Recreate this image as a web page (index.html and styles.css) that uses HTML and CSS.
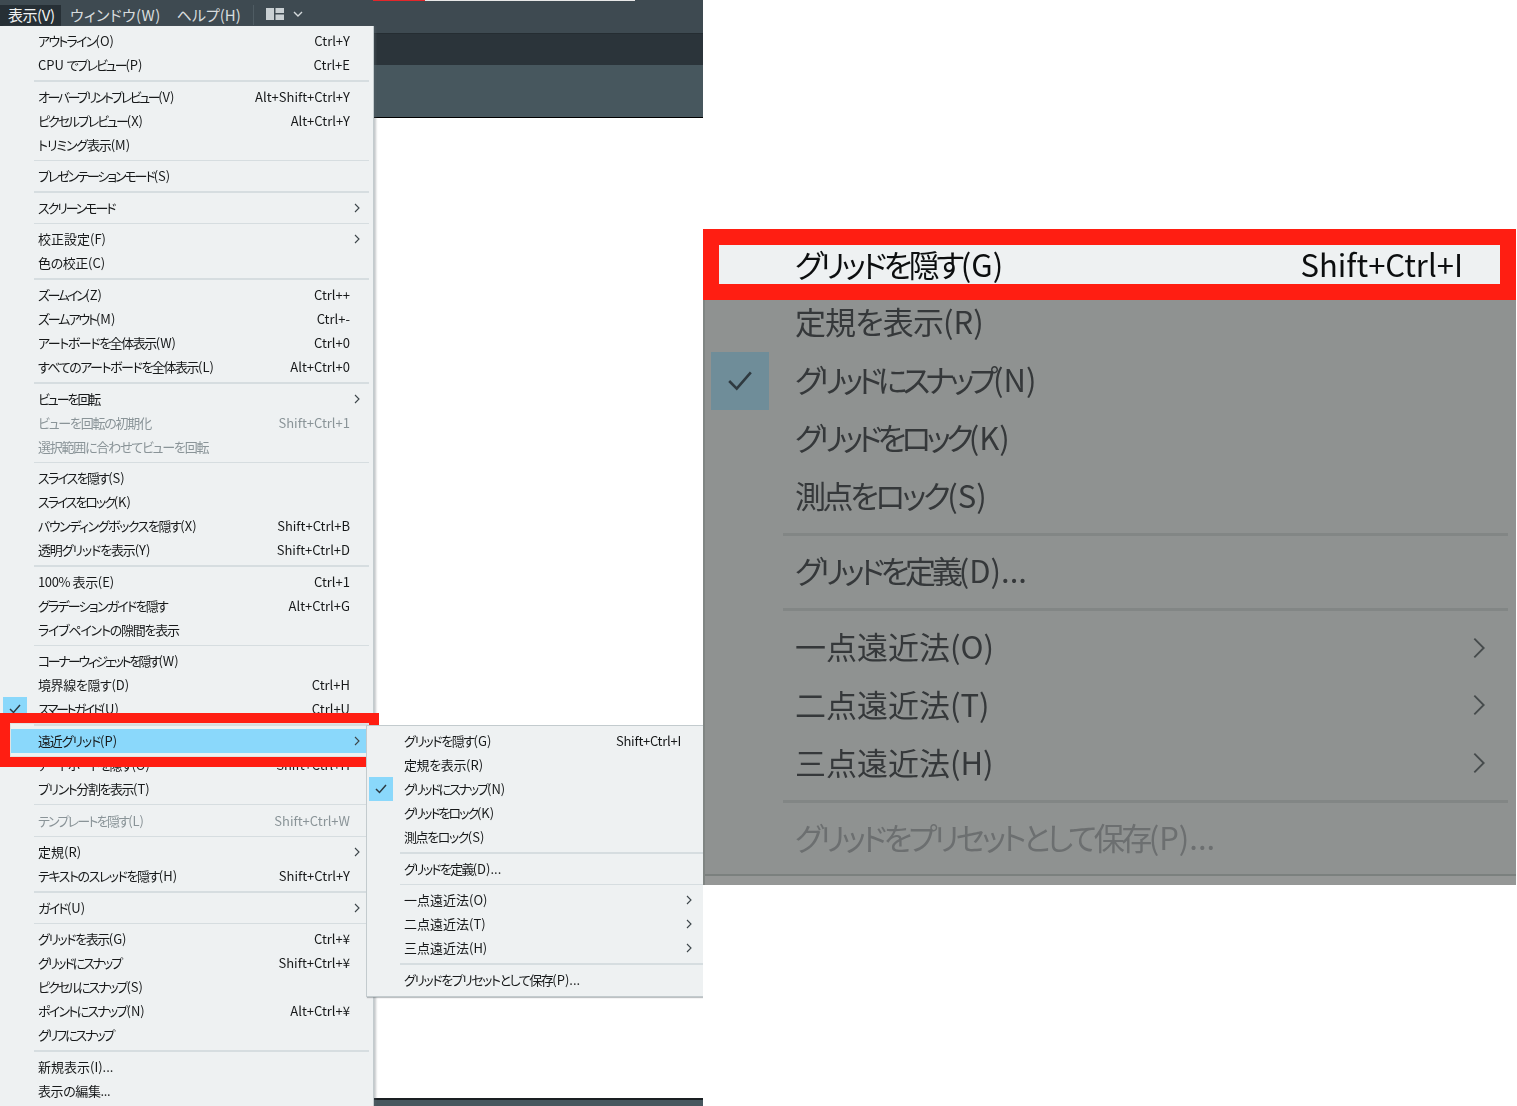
FILE: index.html
```html
<!DOCTYPE html>
<html lang="ja">
<head>
<meta charset="utf-8">
<title>遠近グリッド</title>
<link rel="stylesheet" href="styles.css">
</head>
<body>
<div class="page">
  <section class="shot">
    <div class="progress"><span class="p-red"></span><span class="p-white"></span></div>
    <header class="menubar">
      <span class="mb-item mb-active">表示(V)</span>
      <span class="mb-item">ウィンドウ(W)</span>
      <span class="mb-item">ヘルプ(H)</span>
      <span class="mb-sep"></span>
      <svg class="mb-layout" width="18" height="14" viewBox="0 0 18 14"><path d="M0 1h8v12H0zM9.500 1H18v5H9.500zM9.500 7.500H18V13H9.500z" fill="#c9d0d3"/></svg>
      <svg class="mb-chev" width="10" height="6" viewBox="0 0 10 6"><path d="M1 1l4 4 4-4" fill="none" stroke="#d5dadc" stroke-width="1.400"/></svg>
    </header>
    <div class="bar-dark"></div>
    <div class="bar-mid"></div>
    <div class="canvas"></div>
    <div class="bar-bottom"></div>

    <nav class="menu">
      <div class="row"><i class="ico"></i><span class="t6">アウトライン<b>(O)</b></span><kbd>Ctrl+Y</kbd></div>
      <div class="row"><i class="ico"></i><span class="t7"><b>CPU </b>でプレビュー<b>(P)</b></span><kbd>Ctrl+E</kbd></div>
      <div class="sep"></div>
      <div class="row"><i class="ico"></i><span class="t8">オーバープリントプレビュー<b>(V)</b></span><kbd>Alt+Shift+Ctrl+Y</kbd></div>
      <div class="row"><i class="ico"></i><span class="t7">ピクセルプレビュー<b>(X)</b></span><kbd>Alt+Ctrl+Y</kbd></div>
      <div class="row"><i class="ico"></i><span class="t3">トリミング表示<b>(M)</b></span></div>
      <div class="sep"></div>
      <div class="row"><i class="ico"></i><span class="t7">プレゼンテーションモード<b>(S)</b></span></div>
      <div class="sep"></div>
      <div class="row"><i class="ico"></i><span class="t7">スクリーンモード</span><svg class="arrow" viewBox="0 0 6 10"><path d="M1 1l4 4-4 4"/></svg></div>
      <div class="sep"></div>
      <div class="row"><i class="ico"></i><span>校正設定<b>(F)</b></span><svg class="arrow" viewBox="0 0 6 10"><path d="M1 1l4 4-4 4"/></svg></div>
      <div class="row"><i class="ico"></i><span class="t1">色の校正<b>(C)</b></span></div>
      <div class="sep"></div>
      <div class="row"><i class="ico"></i><span class="t8">ズームイン<b>(Z)</b></span><kbd>Ctrl++</kbd></div>
      <div class="row"><i class="ico"></i><span class="t7">ズームアウト<b>(M)</b></span><kbd>Ctrl+-</kbd></div>
      <div class="row"><i class="ico"></i><span class="t5">アートボードを全体表示<b>(W)</b></span><kbd>Ctrl+0</kbd></div>
      <div class="row"><i class="ico"></i><span class="t5">すべてのアートボードを全体表示<b>(L)</b></span><kbd>Alt+Ctrl+0</kbd></div>
      <div class="sep"></div>
      <div class="row"><i class="ico"></i><span class="t7">ビューを回転</span><svg class="arrow" viewBox="0 0 6 10"><path d="M1 1l4 4-4 4"/></svg></div>
      <div class="row off"><i class="ico"></i><span class="t4">ビューを回転の初期化</span><kbd>Shift+Ctrl+1</kbd></div>
      <div class="row off"><i class="ico"></i><span class="t4">選択範囲に合わせてビューを回転</span></div>
      <div class="sep"></div>
      <div class="row"><i class="ico"></i><span class="t6">スライスを隠す<b>(S)</b></span></div>
      <div class="row"><i class="ico"></i><span class="t7">スライスをロック<b>(K)</b></span></div>
      <div class="row"><i class="ico"></i><span class="t5">バウンディングボックスを隠す<b>(X)</b></span><kbd>Shift+Ctrl+B</kbd></div>
      <div class="row"><i class="ico"></i><span class="t3">透明グリッドを表示<b>(Y)</b></span><kbd>Shift+Ctrl+D</kbd></div>
      <div class="sep"></div>
      <div class="row"><i class="ico"></i><span class="t1">100% 表示<b>(E)</b></span><kbd>Ctrl+1</kbd></div>
      <div class="row"><i class="ico"></i><span class="t6">グラデーションガイドを隠す</span><kbd>Alt+Ctrl+G</kbd></div>
      <div class="row"><i class="ico"></i><span class="t4">ライブペイントの隙間を表示</span></div>
      <div class="sep"></div>
      <div class="row"><i class="ico"></i><span class="t8">コーナーウィジェットを隠す<b>(W)</b></span></div>
      <div class="row"><i class="ico"></i><span class="t1">境界線を隠す<b>(D)</b></span><kbd>Ctrl+H</kbd></div>
      <div class="row"><i class="ico ico-on"><svg viewBox="0 0 12 10"><path d="M1 5l3.500 3.500L11 1"/></svg></i><span class="t8">スマートガイド<b>(U)</b></span><kbd>Ctrl+U</kbd></div>
      <div class="sep"></div>
      <div class="row row-hot"><i class="ico"></i><span class="t3">遠近グリッド<b>(P)</b></span><svg class="arrow" viewBox="0 0 6 10"><path d="M1 1l4 4-4 4"/></svg></div>
      <div class="row"><i class="ico"></i><span class="t5">アートボードを隠す<b>(O)</b></span><kbd>Shift+Ctrl+H</kbd></div>
      <div class="row"><i class="ico"></i><span class="t5">プリント分割を表示<b>(T)</b></span></div>
      <div class="sep"></div>
      <div class="row off"><i class="ico"></i><span class="t6">テンプレートを隠す<b>(L)</b></span><kbd>Shift+Ctrl+W</kbd></div>
      <div class="sep"></div>
      <div class="row"><i class="ico"></i><span>定規<b>(R)</b></span><svg class="arrow" viewBox="0 0 6 10"><path d="M1 1l4 4-4 4"/></svg></div>
      <div class="row"><i class="ico"></i><span class="t5">テキストのスレッドを隠す<b>(H)</b></span><kbd>Shift+Ctrl+Y</kbd></div>
      <div class="sep"></div>
      <div class="row"><i class="ico"></i><span class="t6">ガイド<b>(U)</b></span><svg class="arrow" viewBox="0 0 6 10"><path d="M1 1l4 4-4 4"/></svg></div>
      <div class="sep"></div>
      <div class="row"><i class="ico"></i><span class="t5">グリッドを表示<b>(G)</b></span><kbd>Ctrl+¥</kbd></div>
      <div class="row"><i class="ico"></i><span class="t7">グリッドにスナップ</span><kbd>Shift+Ctrl+¥</kbd></div>
      <div class="row"><i class="ico"></i><span class="t7">ピクセルにスナップ<b>(S)</b></span></div>
      <div class="row"><i class="ico"></i><span class="t6">ポイントにスナップ<b>(N)</b></span><kbd>Alt+Ctrl+¥</kbd></div>
      <div class="row"><i class="ico"></i><span class="t7">グリフにスナップ</span></div>
      <div class="sep"></div>
      <div class="row"><i class="ico"></i><span>新規表示<b>(I)...</b></span></div>
      <div class="row"><i class="ico"></i><span class="t1">表示の編集...</span></div>
    </nav>

    <div class="callout"></div>

    <nav class="menu submenu">
      <div class="row"><i class="ico"></i><span class="t5">グリッドを隠す<b>(G)</b></span><kbd>Shift+Ctrl+I</kbd></div>
      <div class="row"><i class="ico"></i><span class="t1">定規を表示<b>(R)</b></span></div>
      <div class="row"><i class="ico ico-on"><svg viewBox="0 0 12 10"><path d="M1 5l3.500 3.500L11 1"/></svg></i><span class="t7">グリッドにスナップ<b>(N)</b></span></div>
      <div class="row"><i class="ico"></i><span class="t7">グリッドをロック<b>(K)</b></span></div>
      <div class="row"><i class="ico"></i><span class="t5">測点をロック<b>(S)</b></span></div>
      <div class="sep"></div>
      <div class="row"><i class="ico"></i><span class="t6">グリッドを定義<b>(D)...</b></span></div>
      <div class="sep"></div>
      <div class="row"><i class="ico"></i><span>一点遠近法<b>(O)</b></span><svg class="arrow" viewBox="0 0 6 10"><path d="M1 1l4 4-4 4"/></svg></div>
      <div class="row"><i class="ico"></i><span>二点遠近法<b>(T)</b></span><svg class="arrow" viewBox="0 0 6 10"><path d="M1 1l4 4-4 4"/></svg></div>
      <div class="row"><i class="ico"></i><span>三点遠近法<b>(H)</b></span><svg class="arrow" viewBox="0 0 6 10"><path d="M1 1l4 4-4 4"/></svg></div>
      <div class="sep"></div>
      <div class="row"><i class="ico"></i><span class="t5">グリッドをプリセットとして保存<b>(P)...</b></span></div>
    </nav>
  </section>

  <section class="detail">
    <div class="panel">
      <div class="zfirst"><span class="t5">グリッドを隠す<b>(G)</b></span><kbd>Shift+Ctrl+I</kbd></div>
      <div class="zlist">
        <div class="zrow"><i class="zico"></i><span class="t1">定規を表示<b>(R)</b></span></div>
        <div class="zrow"><i class="zico zico-on"><svg viewBox="0 0 12 10"><path d="M1 5l3.500 3.500L11 1"/></svg></i><span class="t7">グリッドにスナップ<b>(N)</b></span></div>
        <div class="zrow"><i class="zico"></i><span class="t7">グリッドをロック<b>(K)</b></span></div>
        <div class="zrow"><i class="zico"></i><span class="t5">測点をロック<b>(S)</b></span></div>
        <div class="zsep"></div>
        <div class="zrow"><i class="zico"></i><span class="t6">グリッドを定義<b>(D)...</b></span></div>
        <div class="zsep"></div>
        <div class="zrow"><i class="zico"></i><span>一点遠近法<b>(O)</b></span><svg class="zarrow" viewBox="0 0 6 10"><path d="M1 1l4 4-4 4"/></svg></div>
        <div class="zrow"><i class="zico"></i><span>二点遠近法<b>(T)</b></span><svg class="zarrow" viewBox="0 0 6 10"><path d="M1 1l4 4-4 4"/></svg></div>
        <div class="zrow"><i class="zico"></i><span>三点遠近法<b>(H)</b></span><svg class="zarrow" viewBox="0 0 6 10"><path d="M1 1l4 4-4 4"/></svg></div>
        <div class="zsep"></div>
        <div class="zrow zoff"><i class="zico"></i><span class="t5">グリッドをプリセットとして保存<b>(P)...</b></span></div>
      </div>
      <div class="zfoot"></div>
    </div>
  </section>
</div>
</body>
</html>
```

FILE: styles.css
```css
* { box-sizing: border-box; }
html, body { margin: 0; height: 1106px; overflow: hidden; background: #fff; }
body { font-family: "Noto Sans CJK JP", "Liberation Sans", sans-serif; font-feature-settings: "palt"; color: #17191a; }
i { font-style: normal; }
b { font-weight: 400; letter-spacing: 0; }
kbd { font: inherit; }

.t1 { letter-spacing: -.03em; }
.t2 { letter-spacing: -.06em; }
.t3 { letter-spacing: -.088em; }
.t4 { letter-spacing: -.095em; }
.t5 { letter-spacing: -.112em; }
.t6 { letter-spacing: -.135em; }
.t7 { letter-spacing: -.16em; }
.t8 { letter-spacing: -.19em; }

.page { display: flex; width: 1517px; height: 1106px; }

.shot { position: relative; width: 703px; height: 1106px; display: flex; flex-direction: column; flex: none; overflow: hidden; }
.progress { display: flex; height: 1px; padding-left: 373px; background: #3e4a51; flex: none; }
.p-red { width: 52px; background: #e3262a; }
.p-white { width: 210px; background: #e8e8e8; }
.menubar { display: flex; align-items: flex-start; height: 32px; padding-top: 4px; background: #3e4a51; flex: none; color: #d7dcde; font-size: 15px; }
.mb-item { display: flex; align-items: center; height: 21px; padding-bottom: 3px; white-space: nowrap; }
.mb-active { width: 61px; padding-left: 8px; background: #262f35; color: #f0f2f3; letter-spacing: -.03em; }
.mb-item:nth-child(2) { margin-left: 9px; letter-spacing: .03em; }
.mb-item:nth-child(3) { margin-left: 16px; }
.mb-sep { width: 1px; height: 20px; margin-left: 12px; background: #4f5c63; }
.mb-layout { margin: 2px 0 0 12px; }
.mb-chev { margin: 6px 0 0 9px; }
.bar-dark { height: 32px; background: #2b343a; border-top: 1px solid #252d32; flex: none; }
.bar-mid { height: 53px; background: #47575e; border-bottom: 1px solid #000; flex: none; }
.canvas { flex: 1; background: #fff; }
.bar-bottom { height: 8px; background: #47575e; border-top: 2px solid #1a1f22; flex: none; }

.menu { position: absolute; left: 0; top: 26px; width: 373px; height: 1080px; padding: 3px 0; background: #eef1f2; box-shadow: 1px 0 0 #c3cbce, 3px 0 2px rgba(90, 100, 105, .35); font-size: 13px; }
.row { display: flex; align-items: center; height: 24px; padding: 0 12px 0 3px; white-space: nowrap; }
.row span, .row kbd { margin-bottom: 1px; filter: blur(.25px); }
.ico { flex: none; display: flex; align-items: center; justify-content: center; width: 24px; height: 24px; margin-right: 11px; }
.ico svg { width: 12px; height: 10px; fill: none; stroke: #2c3a42; stroke-width: 1.500; }
.ico-on { background: #8ad8fb; }
.row kbd { margin-left: auto; margin-right: 11px; }
.arrow { flex: none; width: 6px; height: 10px; margin-left: auto; margin-right: 1px; fill: none; stroke: #3c4549; stroke-width: 1.100; }
.off { color: #8a9498; }
.row-hot { background: #8ad8fb; }
.sep { display: flex; align-items: center; height: 7.6px; margin: 0 4px 0 34px; }
.sep::before { content: ""; width: 100%; height: 1.500px; background: #d6dde0; }

.callout { position: absolute; left: 0; top: 713px; width: 379px; height: 54px; border: 10px solid #ff1e12; box-shadow: inset 0 0 0 1px #dfe3e4; }

.submenu { left: 367px; top: 726px; width: 336px; height: 270px; padding: 3px 0 0 1px; box-shadow: 0 0 0 1px #c3cbce, 0 2px 1px rgba(90, 100, 105, .4); }
.submenu .row { padding-left: 1px; }
.submenu .row kbd { margin-right: 10px; letter-spacing: -.02em; }
.submenu .arrow { margin-right: -1px; }
.submenu .sep { margin: 0 0 0 32px; }

.detail { flex: 1; padding: 229px 1px 0 0; }
.panel { display: flex; flex-direction: column; height: 656px; background: #8f9291; border-left: 2px solid #808583; font-size: 31px; color: #35383a; }
.zfirst { position: relative; z-index: 1; display: flex; align-items: center; justify-content: space-between; flex: none; height: 71px; margin-left: -2px; padding: 0 37px 0 76px; border: 16px solid #ff1e12; background: #eef1f2; color: #0c0e0f; }
.zfirst span, .zfirst kbd { margin-bottom: 3px; filter: blur(.4px); }
.zlist { margin-top: -6px; }
.zrow { display: flex; align-items: center; height: 57.750px; padding: 0 30px 0 6px; white-space: nowrap; }
.zrow span { margin-bottom: 4px; filter: blur(.7px); }
.zico { flex: none; display: flex; align-items: center; justify-content: center; width: 58px; height: 58px; margin-right: 26px; }
.zico svg { width: 26px; height: 22px; fill: none; stroke: #2f3a40; stroke-width: 1.200; }
.zico-on { background: #6f8d99; }
.zarrow { flex: none; width: 14px; height: 24px; margin: 0 0 0 auto; fill: none; stroke: #464b4c; stroke-width: .8; }
.zoff { color: #6c6f70; }
.zsep { display: flex; align-items: center; height: 18px; margin: 0 8px 0 78px; }
.zsep::before { content: ""; width: 100%; height: 3px; background: #828685; }
.zfoot { flex: 1; margin-top: 6px; border-top: 2px solid #7b807e; background: #959796; }
```
